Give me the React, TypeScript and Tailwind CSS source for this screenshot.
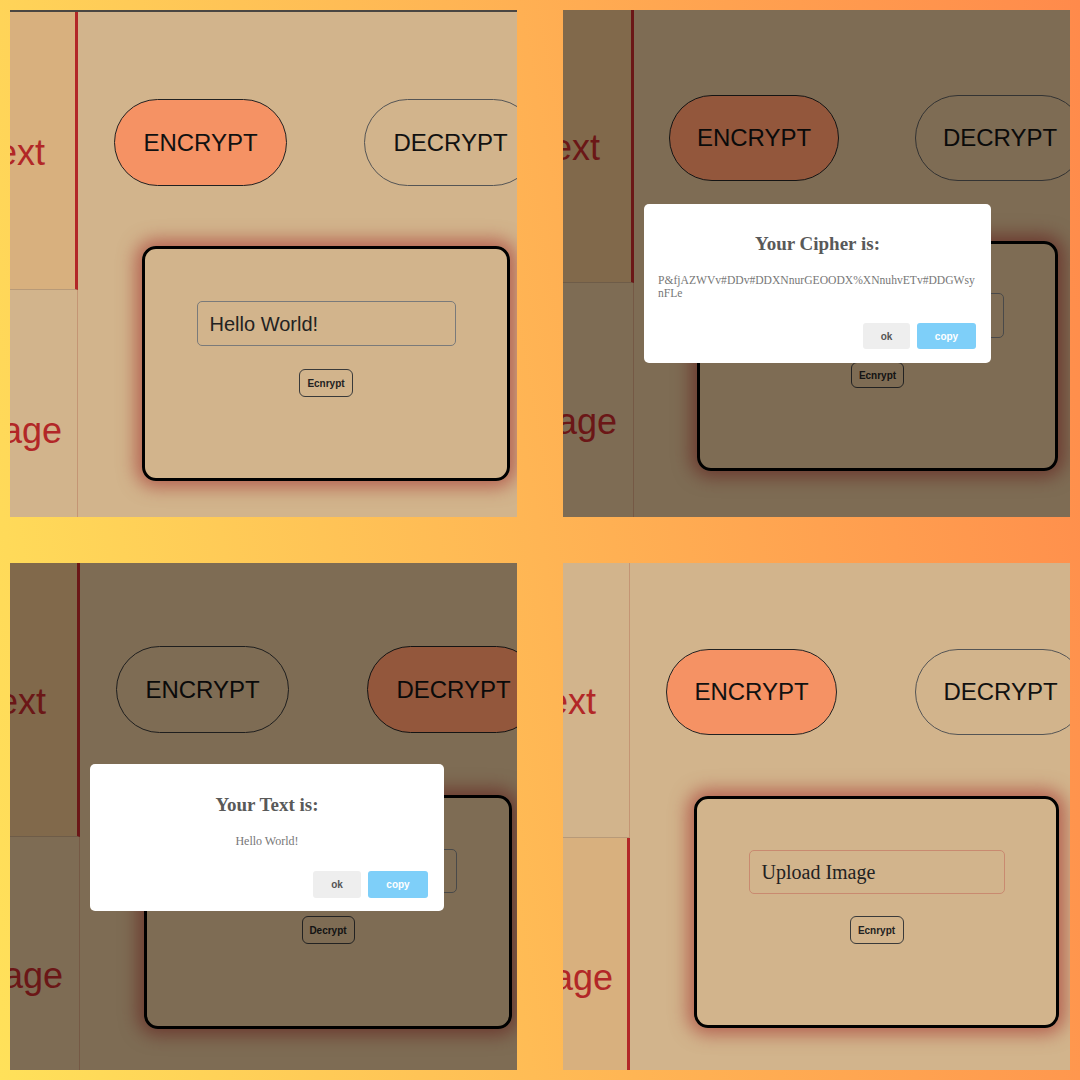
import React from 'react';

type Panel = {
  key: string;
  topLine: boolean;
  sideW: string;
  halfH: string;
  textMl: string;
  active: 'top' | 'bottom';
  pressed: 'encrypt' | 'decrypt';
  btnRow: string;
  btnSize: string;
  btnGap: string;
  card: string;
  input: string;
  inputText: string;
  serifInput: boolean;
  action: string;
  actionBox: string;
  modal?: 'cipher' | 'text';
};

const panels: Panel[] = [
  {
    key: 'p1',
    topLine: true,
    sideW: 'w-[68px]',
    halfH: 'h-[278px]',
    textMl: '-ml-[68px]',
    active: 'top',
    pressed: 'encrypt',
    btnRow: 'ml-[36px] mt-[87px]',
    btnSize: 'w-[173px] h-[87px]',
    btnGap: 'gap-[77px]',
    card: 'ml-[64px] mt-[60px] w-[368px] h-[235px] pt-[52px]',
    input: 'w-[259px] h-[45px] border-[#7a7a7a]',
    inputText: 'Hello World!',
    serifInput: false,
    action: 'Ecnrypt',
    actionBox: 'mt-[23px] w-[54px] h-[28px]',
  },
  {
    key: 'p2',
    topLine: false,
    sideW: 'w-[71px]',
    halfH: 'h-[273px]',
    textMl: '-ml-[66px]',
    active: 'top',
    pressed: 'encrypt',
    btnRow: 'ml-[35px] mt-[85px]',
    btnSize: 'w-[170px] h-[86px]',
    btnGap: 'gap-[76px]',
    card: 'ml-[63px] mt-[60px] w-[361px] h-[230px] pt-[49px]',
    input: 'w-[253px] h-[45px] border-[#7a7a7a]',
    inputText: 'Hello World!',
    serifInput: false,
    action: 'Ecnrypt',
    actionBox: 'mt-[24px] w-[53px] h-[26px]',
    modal: 'cipher',
  },
  {
    key: 'p3',
    topLine: false,
    sideW: 'w-[70px]',
    halfH: 'h-[274px]',
    textMl: '-ml-[67px]',
    active: 'top',
    pressed: 'decrypt',
    btnRow: 'ml-[36px] mt-[83px]',
    btnSize: 'w-[173px] h-[87px]',
    btnGap: 'gap-[78px]',
    card: 'ml-[64px] mt-[62px] w-[368px] h-[234px] pt-[51px]',
    input: 'w-[258px] h-[44px] border-[#7a7a7a]',
    inputText: '',
    serifInput: false,
    action: 'Decrypt',
    actionBox: 'mt-[23px] w-[53px] h-[28px]',
    modal: 'text',
  },
  {
    key: 'p4',
    topLine: false,
    sideW: 'w-[67px]',
    halfH: 'h-[275px]',
    textMl: '-ml-[70px]',
    active: 'bottom',
    pressed: 'encrypt',
    btnRow: 'ml-[36px] mt-[86px]',
    btnSize: 'w-[171px] h-[86px]',
    btnGap: 'gap-[78px]',
    card: 'ml-[64px] mt-[61px] w-[365px] h-[232px] pt-[51px]',
    input: 'w-[256px] h-[44px] border-[#c98a70]',
    inputText: 'Upload Image',
    serifInput: true,
    action: 'Ecnrypt',
    actionBox: 'mt-[22px] w-[54px] h-[28px]',
  },
];

function SideItem({ label, active, p, last }: { label: string; active: boolean; p: Panel; last: boolean }) {
  return (
    <div
      className={`${p.halfH} shrink-0 flex items-center overflow-hidden ${
        active ? 'bg-[#d8b07e] border-r-[3px] border-r-[#b22727]' : 'bg-[#d2b48c] border-r border-r-[#c49574]'
      } ${last ? '' : 'border-b border-b-[#b89a78]'}`}
    >
      <div className={`w-[140px] shrink-0 ${p.textMl} mt-[4px] text-center text-[36px] leading-[40px] text-[#b22727] whitespace-nowrap`}>
        {label}
      </div>
    </div>
  );
}

function Modal({ kind }: { kind: 'cipher' | 'text' }) {
  if (kind === 'cipher') {
    return (
      <div className="absolute left-[81px] top-[194px] w-[347px] h-[159px] bg-white rounded-[5px] font-['Liberation_Serif',serif]">
        <div className="mt-[28px] text-center text-[19px] leading-[24px] font-bold text-[#595959]">Your Cipher is:</div>
        <div className="mt-[18px] px-[14px] text-[11.6px] leading-[13px] text-[#777] whitespace-nowrap">
          <div>P&amp;fjAZWVv#DDv#DDXNnurGEOODX%XNnuhvETv#DDGWsy</div>
          <div>nFLe</div>
        </div>
        <div className="mt-[23px] pr-[15px] flex justify-end gap-[7px] font-['Liberation_Sans',sans-serif] text-[10px] font-bold">
          <div className="w-[47px] h-[26px] rounded-[3px] bg-[#eeeeee] text-[#555] flex items-center justify-center">ok</div>
          <div className="w-[59px] h-[26px] rounded-[3px] bg-[#7ecff9] text-white flex items-center justify-center">copy</div>
        </div>
      </div>
    );
  }
  return (
    <div className="absolute left-[80px] top-[201px] w-[354px] h-[147px] bg-white rounded-[5px] font-['Liberation_Serif',serif]">
      <div className="mt-[29px] text-center text-[19px] leading-[24px] font-bold text-[#595959]">Your Text is:</div>
      <div className="mt-[17px] text-center text-[12px] leading-[14px] text-[#777]">Hello World!</div>
      <div className="mt-[23px] pr-[16px] flex justify-end gap-[7px] font-['Liberation_Sans',sans-serif] text-[10px] font-bold">
        <div className="w-[48px] h-[27px] rounded-[3px] bg-[#eeeeee] text-[#555] flex items-center justify-center">ok</div>
        <div className="w-[60px] h-[27px] rounded-[3px] bg-[#7ecff9] text-white flex items-center justify-center">copy</div>
      </div>
    </div>
  );
}

function Screen({ p }: { p: Panel }) {
  const pill = `${p.btnSize} shrink-0 rounded-full border flex items-center justify-center text-[24px] text-[#111]`;
  return (
    <div className="relative w-[507px] h-[507px] overflow-hidden bg-[#d2b48c] flex flex-col font-['Liberation_Sans',Arial,sans-serif]">
      {p.topLine && <div className="h-[2px] shrink-0 bg-[#4a4642]" />}
      <div className="flex flex-1 min-h-0">
        <div className={`${p.sideW} shrink-0 flex flex-col`}>
          <SideItem label="Text" active={p.active === 'top'} p={p} last={false} />
          <SideItem label="Image" active={p.active === 'bottom'} p={p} last />
        </div>
        <div className="flex-1 min-w-0 flex flex-col">
          <div className={`flex ${p.btnGap} ${p.btnRow}`}>
            <div className={`${pill} ${p.pressed === 'encrypt' ? 'bg-[#f59264] border-[#222]' : 'border-[#333]'}`}>ENCRYPT</div>
            <div className={`${pill} ${p.pressed === 'decrypt' ? 'bg-[#f59264] border-[#222]' : 'border-[#555]'}`}>DECRYPT</div>
          </div>
          <div
            className={`${p.card} shrink-0 border-[3px] border-black rounded-[14px] flex flex-col items-center shadow-[0_0_18px_6px_rgba(170,70,60,0.75)]`}
          >
            <div
              className={`${p.input} border rounded-[5px] flex items-center pl-[12px] text-[20px] text-[#222] overflow-hidden whitespace-nowrap ${
                p.serifInput ? "font-['Liberation_Serif',serif]" : ''
              }`}
            >
              {p.inputText}
            </div>
            <div className={`${p.actionBox} border-[1.5px] border-[#3a3a3a] rounded-[6px] flex items-center justify-center text-[10px] font-bold text-[#222]`}>
              {p.action}
            </div>
          </div>
        </div>
      </div>
      {p.modal && (
        <>
          <div className="absolute inset-0 bg-black/40" />
          <Modal kind={p.modal} />
        </>
      )}
    </div>
  );
}

export default function App() {
  return (
    <div className="w-[1080px] h-[1080px] p-[10px] grid grid-cols-[507px_507px] grid-rows-[507px_507px] gap-[46px] bg-[linear-gradient(80deg,#ffe15a_0%,#ffb554_50%,#ff8a4b_100%)]">
      {panels.map(p => (
        <Screen key={p.key} p={p} />
      ))}
    </div>
  );
}
